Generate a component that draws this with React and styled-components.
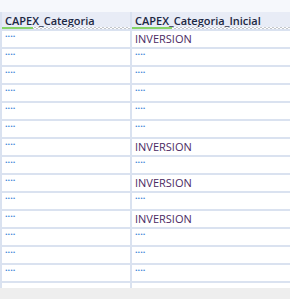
import React from "react";
import styled, { createGlobalStyle } from "styled-components";

const Global = createGlobalStyle`
  html, body { margin: 0; padding: 0; background: #eeeeee; }
  body { font-family: "Open Sans", "Noto Sans", sans-serif; }
`;

const Page = styled.div`
  width: 290px;
  height: 299px;
  overflow: hidden;
  background: #eeeeee;
  display: flex;
  flex-direction: column;
`;

const TopBand = styled.div`
  height: 12px;
  flex: none;
  background: #f6f8fc;
`;

const Grid = styled.div`
  display: grid;
  grid-template-columns: 128px 1fr;
  grid-auto-rows: 16px;
  grid-template-rows: 17px;
  column-gap: 2px;
  row-gap: 2px;
  padding-left: 2px;
  background: #dae2f0;
  height: 276px;
  overflow: hidden;
  flex: none;
`;

const HeaderCell = styled.div`
  position: relative;
  background: #e8ecf6;
  padding: 1px 0 0 3px;
  box-sizing: border-box;
  font-size: 11px;
  line-height: 15px;
  font-weight: 600;
  color: #1d2843;
  white-space: nowrap;
  &::after {
    content: "";
    position: absolute;
    left: 0;
    right: 0;
    bottom: 0;
    height: 2px;
    background:
      linear-gradient(90deg, #86d466 0 ${(p) => p.$green}px, transparent ${(p) => p.$green}px),
      repeating-linear-gradient(90deg, #c4c7cc 0 2px, #ffffff 2px 4px) top / 100% 1px no-repeat,
      repeating-linear-gradient(90deg, #ffffff 0 2px, #c4c7cc 2px 4px) bottom / 100% 1px no-repeat;
  }
`;

const Cell = styled.div`
  background: #ffffff;
  padding-left: 3px;
  font-size: 11px;
  line-height: 16px;
  color: #4b2a63;
  white-space: nowrap;
`;

const Dots = styled.span`
  display: block;
  font-size: 9px;
  line-height: 6px;
  font-weight: 700;
  color: #3f86d8;
`;

const values = [
  "INVERSION", "", "", "", "", "", "INVERSION", "", "INVERSION", "", "INVERSION", "", "", "",
];

export default function App() {
  return (
    <>
      <Global />
      <Page>
        <TopBand />
        <Grid>
          <HeaderCell $green={31}>CAPEX_Categoria</HeaderCell>
          <HeaderCell $green={40}>CAPEX_Categoria_Inicial</HeaderCell>
          {values.map((v, i) => (
            <React.Fragment key={i}>
              <Cell><Dots>....</Dots></Cell>
              <Cell>{v ? v : <Dots>....</Dots>}</Cell>
            </React.Fragment>
          ))}
          <Cell />
          <Cell />
        </Grid>
      </Page>
    </>
  );
}
